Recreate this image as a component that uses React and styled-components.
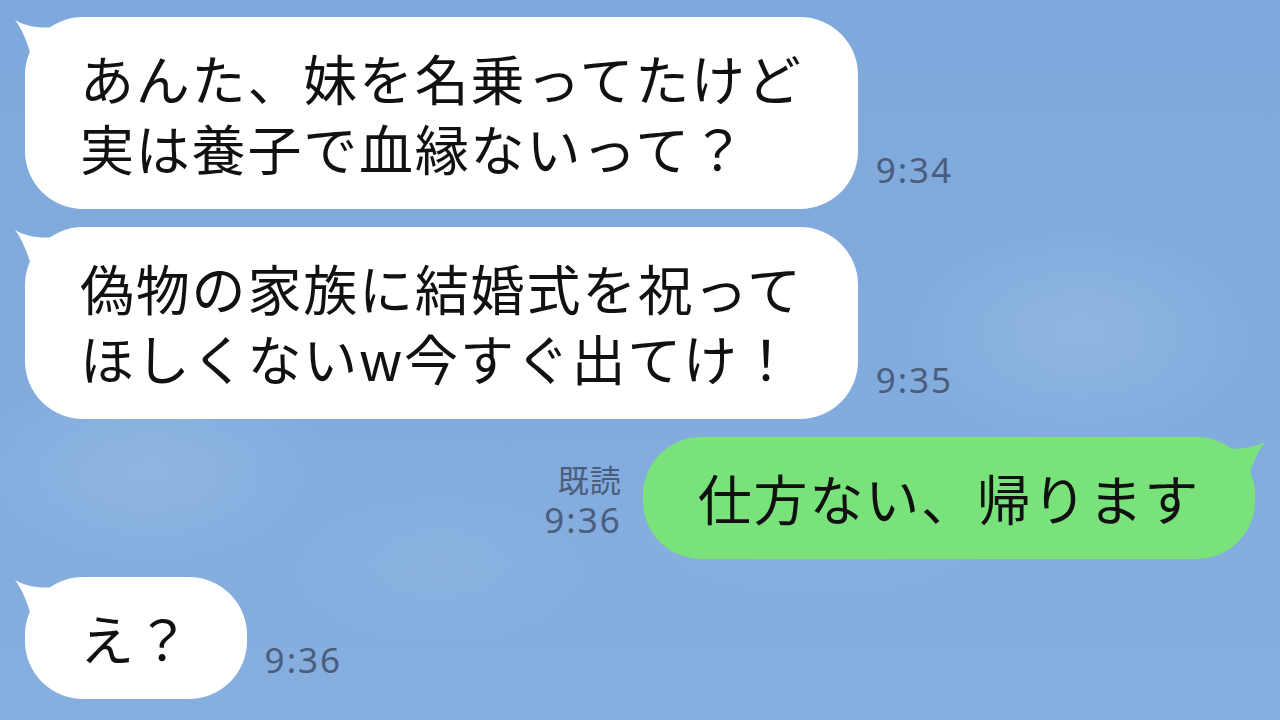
import React from "react";
import styled, { createGlobalStyle } from "styled-components";

const GlobalStyle = createGlobalStyle`
  html, body { margin: 0; padding: 0; }
  body { width: 1280px; height: 720px; overflow: hidden; }
`;

const Screen = styled.div`
  width: 1280px;
  height: 720px;
  overflow: hidden;
  box-sizing: border-box;
  padding: 17px 25px 0 25px;
  display: flex;
  flex-direction: column;
  gap: 18px;
  font-family: "Noto Sans CJK JP", "Noto Sans", sans-serif;
  background:
    radial-gradient(ellipse 260px 160px at 1080px 330px, rgba(160, 196, 232, 0.45), rgba(160, 196, 232, 0) 70%),
    radial-gradient(ellipse 300px 120px at 820px 520px, rgba(150, 188, 228, 0.35), rgba(150, 188, 228, 0) 70%),
    radial-gradient(ellipse 260px 140px at 150px 470px, rgba(160, 196, 232, 0.4), rgba(160, 196, 232, 0) 70%),
    radial-gradient(ellipse 240px 120px at 440px 560px, rgba(150, 188, 228, 0.35), rgba(150, 188, 228, 0) 70%),
    linear-gradient(180deg, #7fa8dc 0%, #82abdd 45%, #86aedf 100%);
`;

const Row = styled.div`
  display: flex;
  align-items: flex-end;
  justify-content: ${(p) => (p.$mine ? "flex-end" : "flex-start")};
  gap: ${(p) => (p.$mine ? "21px" : "18px")};
`;

const Bubble = styled.div`
  position: relative;
  box-sizing: border-box;
  padding: 26px 55px 26px 55px;
  border-radius: 58px;
  background: ${(p) => (p.$mine ? "#79e27a" : "#ffffff")};
  color: #111111;
  font-size: 54px;
  line-height: 70px;
  letter-spacing: 1.8px;
  white-space: nowrap;
`;

const Line = styled.div``;

const TailSvg = styled.svg`
  position: absolute;
  top: 0;
  ${(p) => (p.$mine ? "right: 0;" : "left: 0;")}
  width: 40px;
  height: 45px;
  overflow: visible;
`;

const Tail = ({ mine }) => (
  <TailSvg $mine={mine} viewBox="0 0 40 45">
    {mine ? (
      <path
        d="M50 5 C40 10 25 13 10 11 L10 40 L34 38 C38 26 43 14 50 5 Z"
        fill="#79e27a"
      />
    ) : (
      <path
        d="M-10 3 C0 9 15 12 30 10 L30 40 L6 38 C2 25 -3 12 -10 3 Z"
        fill="#ffffff"
      />
    )}
  </TailSvg>
);

const Meta = styled.div`
  display: flex;
  flex-direction: column;
  align-items: ${(p) => (p.$mine ? "flex-end" : "flex-start")};
  padding-bottom: 19px;
  color: #4b5d7c;
  font-family: "Noto Sans", "Noto Sans CJK JP", sans-serif;
  font-size: 35px;
  line-height: 41px;
  letter-spacing: 2px;
`;

const ReadMark = styled.span`
  font-family: "Noto Sans CJK JP", sans-serif;
  font-size: 31px;
  letter-spacing: 1px;
`;

const Time = styled.span``;

const messages = [
  { mine: false, lines: ["あんた、妹を名乗ってたけど", "実は養子で血縁ないって？"], time: "9:34" },
  { mine: false, lines: ["偽物の家族に結婚式を祝って", "ほしくないw今すぐ出てけ！"], time: "9:35" },
  { mine: true, lines: ["仕方ない、帰ります"], time: "9:36", read: true },
  { mine: false, lines: ["え？"], time: "9:36" },
];

export default function App() {
  return (
    <>
      <GlobalStyle />
      <Screen>
        {messages.map((m, i) => (
          <Row key={i} $mine={m.mine}>
            {m.mine && (
              <Meta $mine>
                {m.read && <ReadMark>既読</ReadMark>}
                <Time>{m.time}</Time>
              </Meta>
            )}
            <Bubble $mine={m.mine}>
              <Tail mine={m.mine} />
              {m.lines.map((l, j) => (
                <Line key={j}>{l}</Line>
              ))}
            </Bubble>
            {!m.mine && (
              <Meta>
                <Time>{m.time}</Time>
              </Meta>
            )}
          </Row>
        ))}
      </Screen>
    </>
  );
}
